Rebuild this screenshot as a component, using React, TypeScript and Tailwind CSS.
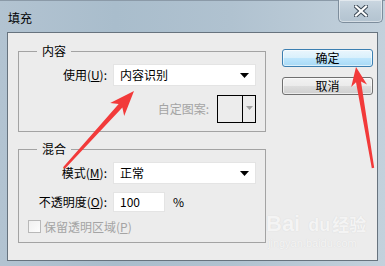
import React from "react";

const font = "font-['Noto_Sans_CJK_SC',sans-serif]";

function Arrow() {
  return (
    <svg className="absolute left-0 top-0 pointer-events-none" width="385" height="266">
      <polygon
        fill="#f23a3a"
        points="64.9,168.8 122.35,107.5 124.2,115.9 134,91 110.2,103.1 118.65,104.1 63.1,167.2"
      />
      <polygon
        fill="#f23a3a"
        points="374.2,167.8 361.0,81.4 367.0,84.4 356,67 351.2,87.0 356.0,82.2 371.8,168.2"
      />
    </svg>
  );
}

function Dropdown({ value }: { value: string }) {
  return (
    <div className="w-[143px] h-[22px] bg-white border border-[#e4e4e4] flex items-center pl-[6px] pr-[6px]">
      <span className="flex-1 text-[12px] text-black leading-none">{value}</span>
      <svg width="9" height="5" viewBox="0 0 9 5">
        <polygon points="0,0 9,0 4.5,5" fill="#000" />
      </svg>
    </div>
  );
}

function Label({ children }: { children: React.ReactNode }) {
  return <div className="w-[89px] text-right text-[12px] text-black leading-none pr-[1px]">{children}</div>;
}

export default function App() {
  return (
    <div
      className={`${font} relative w-[385px] h-[266px] overflow-hidden flex flex-col bg-[linear-gradient(90deg,#b2c3d1_0%,#a9bdcc_30%,#b0c2d0_60%,#c3d1dc_100%)]`}
    >
      {/* title bar */}
      <div className="h-[32px] flex items-start border-t border-[#8b9aa8]">
        <span className="mt-[11px] ml-[8px] text-[12px] text-black leading-none">填充</span>
        <div className="flex-1" />
        <div className="mt-[-1px] mr-[2px] w-[45px] h-[23px] rounded-b-[5px] border border-t-0 border-[#7d8d9c] bg-[linear-gradient(180deg,#cbd7e1_0%,#bccbd7_50%,#b3c3d0_100%)] shadow-[inset_0_0_0_1px_rgba(255,255,255,0.45)] flex items-center justify-center">
          <svg width="14" height="12" viewBox="0 0 14 12">
            <path d="M2 1.5 L12 10.5 M12 1.5 L2 10.5" stroke="#3c4a57" strokeWidth="4.2" strokeLinecap="square" />
            <path d="M2 1.5 L12 10.5 M12 1.5 L2 10.5" stroke="#ffffff" strokeWidth="2.2" strokeLinecap="square" />
          </svg>
        </div>
      </div>

      {/* client */}
      <div className="mx-[7px] mb-[5px] h-[229px] border border-[#67737e] bg-[#ececec] flex">
        <div className="pl-[10px] flex flex-col">
          {/* group 1 */}
          <div className="relative mt-[18px] w-[248px] h-[81px] border border-[#a3a3a3] flex flex-col">
            <span className="absolute left-[18px] top-[-9px] px-[5px] bg-[#ececec] text-[12px] leading-[16px] text-black">内容</span>
            <div className="mt-[12px] flex items-center gap-[5px]">
              <Label>
                使用(<span className="underline">U</span>):
              </Label>
              <Dropdown value="内容识别" />
            </div>
            <div className="mt-[9px] flex items-center justify-end pr-[9px] gap-[8px]">
              <span className="text-[12px] leading-none text-[#a4a4a4]">自定图案:</span>
              <div className="w-[39px] h-[28px] border border-black flex">
                <div className="w-[25px] border-r border-black" />
                <div className="flex-1 flex items-start justify-center pt-[10px]">
                  <svg width="7" height="4" viewBox="0 0 7 4">
                    <polygon points="0,0 7,0 3.5,4" fill="#a0a0a0" />
                  </svg>
                </div>
              </div>
            </div>
          </div>

          {/* group 2 */}
          <div className="relative mt-[17px] w-[248px] h-[94px] border border-[#a3a3a3] flex flex-col">
            <span className="absolute left-[18px] top-[-9px] px-[5px] bg-[#ececec] text-[12px] leading-[16px] text-black">混合</span>
            <div className="mt-[12px] flex items-center gap-[5px]">
              <Label>
                模式(<span className="underline">M</span>):
              </Label>
              <Dropdown value="正常" />
            </div>
            <div className="mt-[8px] flex items-center gap-[5px]">
              <Label>
                不透明度(<span className="underline">O</span>):
              </Label>
              <div className="w-[52px] h-[20px] bg-white border border-[#e4e4e4] flex items-center pl-[6px] text-[12px] leading-none text-black">
                100
              </div>
              <span className="ml-[3px] text-[12px] leading-none text-black">%</span>
            </div>
            <div className="mt-[8px] ml-[9px] flex items-center gap-[3px]">
              <div className="w-[13px] h-[13px] border border-[#b8b8b8] bg-[linear-gradient(135deg,#f0f0f0,#fdfdfd)]" />
              <span className="text-[12px] leading-none text-[#a4a4a4]">
                保留透明区域(<span className="underline">P</span>)
              </span>
            </div>
          </div>
        </div>

        {/* buttons */}
        <div className="ml-[16px] pt-[16px] flex flex-col gap-[10px]">
          <button className="w-[91px] h-[18px] rounded-[3px] border border-[#3c7fb1] bg-[linear-gradient(180deg,#eaf6fd_0%,#d9f0fc_50%,#bee6fd_51%,#a7d9f5_100%)] shadow-[inset_0_0_0_1px_rgba(255,255,255,0.6)] text-[12px] leading-none text-black flex items-center justify-center">
            确定
          </button>
          <button className="w-[91px] h-[18px] rounded-[3px] border border-[#707070] bg-[linear-gradient(180deg,#f2f2f2_0%,#ebebeb_50%,#dddddd_51%,#cfcfcf_100%)] shadow-[inset_0_0_0_1px_rgba(255,255,255,0.6)] text-[12px] leading-none text-black flex items-center justify-center">
            取消
          </button>
        </div>
      </div>

      {/* watermark */}
      <div className="absolute left-[266px] top-[212px] flex flex-col items-start pointer-events-none opacity-80">
        <span className="font-['Liberation_Sans',sans-serif] font-bold text-[22px] leading-[24px] text-[#f7f7f7] [text-shadow:0_0_1px_#cfcfcf]">
          Bai<span className="ml-[8px] text-[18px]">du</span>
          <span className="ml-[2px] font-['Noto_Sans_CJK_SC',sans-serif] text-[17px]">经验</span>
        </span>
        <span className="mt-[1px] ml-[2px] font-['Liberation_Sans',sans-serif] text-[11px] leading-none text-[#f7f7f7] [text-shadow:0_0_1px_#cfcfcf]">
          jingyan.baidu.com
        </span>
      </div>

      <Arrow />
    </div>
  );
}
